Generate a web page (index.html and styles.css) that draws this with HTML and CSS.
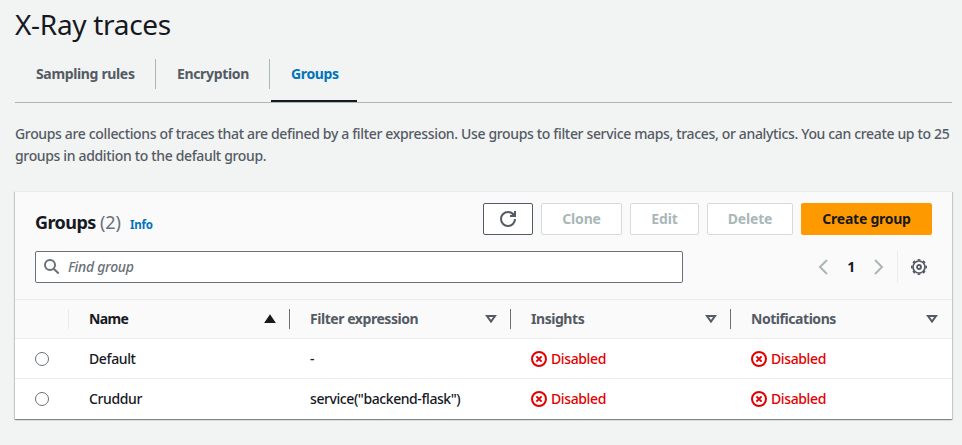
FILE: index.html
```html
<!DOCTYPE html>
<html lang="en">
<head>
<meta charset="utf-8">
<title>X-Ray traces</title>
<link rel="stylesheet" href="styles.css">
</head>
<body>
<svg width="0" height="0" class="defs" aria-hidden="true">
  <symbol id="error" viewBox="0 0 16 16"><circle cx="8" cy="8" r="7"/><path d="M10.600 5.400 5.400 10.600M10.600 10.600 5.400 5.400"/></symbol>
  <symbol id="sort" viewBox="0 0 16 16"><path d="M4 5h8l-4 5.500z"/></symbol>
</svg>
<main class="page">
  <h1 class="title">X-Ray traces</h1>
  <nav class="tabs">
    <a class="tab">Sampling rules</a>
    <a class="tab">Encryption</a>
    <a class="tab active">Groups</a>
  </nav>
  <p class="description">Groups are collections of traces that are defined by a filter expression. Use groups to filter service maps, traces, or analytics. You can create up to 25<br>groups in addition to the default group.</p>
  <section class="panel">
    <header class="panel-head">
      <div class="head-row">
        <h2 class="heading">Groups <span class="count">(2)</span></h2>
        <a class="info">Info</a>
        <div class="actions">
          <button class="btn refresh" aria-label="Refresh"><svg class="icon" viewBox="0 0 16 16"><path d="M15 8A7 7 0 1 1 8 1c2.500 0 4.600 1.200 5.900 3"/><path d="M10 5h5V0"/><path class="solid" d="m10.500 5 4.500-4v4z"/></svg></button>
          <button class="btn clone">Clone</button>
          <button class="btn edit">Edit</button>
          <button class="btn delete">Delete</button>
          <button class="btn primary">Create group</button>
        </div>
      </div>
      <div class="tools">
        <label class="search"><svg class="icon" viewBox="0 0 16 16"><circle cx="6" cy="6" r="5"/><path d="m9.700 9.700 5 4.800"/></svg><span class="placeholder">Find group</span></label>
        <div class="pager">
          <svg class="icon arrow" viewBox="0 0 16 16"><path d="M12 1 5 8l7 7"/></svg>
          <span class="page-no">1</span>
          <svg class="icon arrow" viewBox="0 0 16 16"><path d="m4 1 7 7-7 7"/></svg>
        </div>
        <div class="settings"><svg class="icon" viewBox="0 0 16 16"><circle class="rim" cx="8" cy="8" r="6"/><circle class="teeth" cx="8" cy="8" r="7.200" pathLength="16" transform="rotate(-11.250 8 8)"/><circle class="hub" cx="8" cy="8" r="2"/></svg></div>
      </div>
    </header>
    <div class="row thead">
      <div class="pick"></div>
      <div class="cell sorted">Name<svg class="icon sort" viewBox="0 0 16 16"><path d="M4 11h8L8 5z"/></svg></div>
      <div class="cell">Filter expression<svg class="icon sort"><use href="#sort"/></svg></div>
      <div class="cell">Insights<svg class="icon sort"><use href="#sort"/></svg></div>
      <div class="cell">Notifications<svg class="icon sort"><use href="#sort"/></svg></div>
    </div>
    <div class="row">
      <div class="pick"><i class="radio"></i></div>
      <div class="cell">Default</div>
      <div class="cell">-</div>
      <div class="cell status"><svg class="icon"><use href="#error"/></svg>Disabled</div>
      <div class="cell status"><svg class="icon"><use href="#error"/></svg>Disabled</div>
    </div>
    <div class="row">
      <div class="pick"><i class="radio"></i></div>
      <div class="cell">Cruddur</div>
      <div class="cell expr">service("backend-flask")</div>
      <div class="cell status"><svg class="icon"><use href="#error"/></svg>Disabled</div>
      <div class="cell status"><svg class="icon"><use href="#error"/></svg>Disabled</div>
    </div>
  </section>
</main>
</body>
</html>
```
FILE: styles.css
```css
* { box-sizing: border-box; }
body {
  margin: 0;
  background: #f2f3f3;
  color: #16191f;
  font: 500 14px/22px "Noto Sans", "Open Sans", sans-serif;
  letter-spacing: -0.38px;
}
.defs { display: block; position: absolute; }
.page { padding: 6px 10px 0 15px; height: 445px; overflow: hidden; }
.title { margin: 0; font-size: 28px; line-height: 36px; font-weight: 450; letter-spacing: -0.3px; }
.tabs { display: flex; height: 61px; border-bottom: 1px solid #aab7b8; padding-top: 17px; }
.tab { position: relative; height: 30px; padding: 4px 20px 0 21px; border-right: 1px solid #aab7b8; font-weight: 700; letter-spacing: -0.35px; color: #545b64; white-space: nowrap; }
.tab:nth-child(1) { width: 141px; }
.tab:nth-child(2) { width: 114px; }
.tab.active { width: 87px; border: 0; color: #0073bb; }
.tab.active::after { content: ""; position: absolute; left: 1px; right: 0; top: 41px; height: 2px; background: #16191f; }
.description { margin: 20px 0 0; color: #545b64; white-space: nowrap; letter-spacing: -0.345px; }
.panel { margin-top: 24px; height: 228px; background: #fff; box-shadow: 0 1px 1px rgba(0,28,36,.3), 1px 1px 1px rgba(0,28,36,.15), -1px 1px 1px rgba(0,28,36,.15); border-top: 1px solid #eaeded; }
.panel-head { height: 108px; background: #fafafa; border-bottom: 1px solid #eaeded; padding: 11px 20px 0 20px; }
.head-row { display: flex; height: 32px; align-items: center; }
.heading { margin: 6px 0 0; font-size: 18px; line-height: 22px; white-space: nowrap; letter-spacing: -0.55px; }
.count { color: #687078; font-weight: 400; letter-spacing: 0; }
.info { margin: 11px 0 0 9px; font-size: 11.500px; font-weight: 700; line-height: 18px; letter-spacing: -0.2px; color: #0073bb; }
.actions { display: flex; gap: 8px; margin-left: auto; }
.btn { height: 32px; padding: 0; border: 1px solid #d5dbdb; border-radius: 2px; background: #fff; font: 700 14px/22px "Noto Sans", sans-serif; letter-spacing: -0.15px; color: #aab7b8; }
.refresh { width: 50px; border-color: #545b64; color: #545b64; display: grid; place-items: center; }
.clone { width: 81px; }
.edit { width: 69px; }
.delete { width: 86px; }
.primary { width: 131px; background: #ff9900; border-color: #ff9900; color: #16191f; letter-spacing: -0.25px; }
.icon { width: 16px; height: 16px; fill: none; stroke: currentColor; stroke-width: 2; flex: none; }
.solid { fill: currentColor; stroke: none; }
.rim { stroke-width: 1.7; }
.teeth { stroke-width: 1.6; stroke-dasharray: 1 1; }
.hub { stroke-width: 1.8; }
.tools { display: flex; margin-top: 16px; height: 32px; align-items: center; }
.search { width: 648px; height: 32px; display: flex; align-items: center; gap: 8px; padding-left: 8px; border: 1px solid #687078; border-radius: 2px; background: #fff; color: #687078; }
.placeholder { font-style: italic; letter-spacing: -0.3px; }
.pager { display: flex; align-items: center; margin-left: 132px; color: #aab7b8; }
.page-no { width: 40px; text-align: center; color: #16191f; font-weight: 700; }
.settings { height: 32px; margin-left: auto; padding-left: 13px; padding-right: 5px; display: flex; align-items: center; border-left: 1px solid #eaeded; color: #545b64; }
.row { display: grid; grid-template-columns: 54px 221px 221px 220px 221px; height: 40px; align-items: center; border-bottom: 1px solid #eaeded; }
.row:last-child { border: 0; }
.thead { height: 39px; background: #fafafa; color: #545b64; font-weight: 700; }
.pick { padding-left: 20px; height: 20px; display: flex; align-items: center; }
.thead .pick { border-right: 1px solid #eaeded; }
.radio { width: 14px; height: 14px; border: 1px solid #687078; border-radius: 50%; }
.cell { display: flex; align-items: center; padding-left: 20px; height: 20px; white-space: nowrap; }
.thead .cell { justify-content: space-between; border-right: 1px solid #687078; padding-right: 11px; letter-spacing: -0.45px; }
.thead .cell:last-child { border: 0; padding-right: 12px; }
.thead .sorted { color: #16191f; letter-spacing: -0.65px; }
.sorted .sort { fill: currentColor; }
.status { color: #e30000; gap: 4px; }
.expr { letter-spacing: -0.42px; }
```
